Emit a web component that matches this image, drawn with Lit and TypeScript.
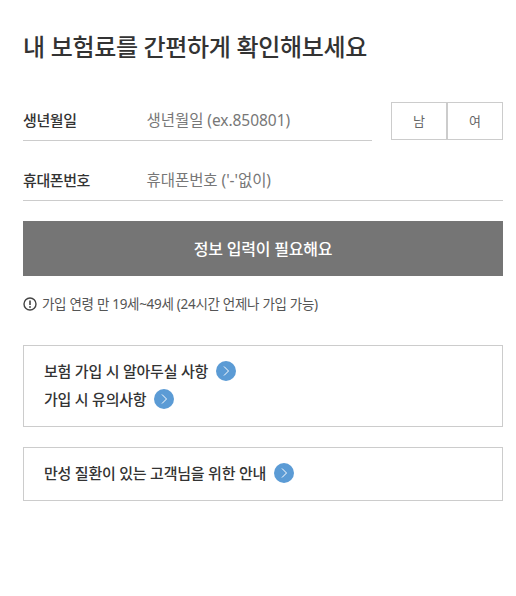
import { LitElement, html, css } from "lit";
import { customElement } from "lit/decorators.js";

const arrow = html`<svg class="arrow" viewBox="0 0 20 20" aria-hidden="true"><circle cx="10" cy="10" r="10" fill="#5b9bd5"/><path d="M8 5.5 L12.5 10 L8 14.5" fill="none" stroke="#fff" stroke-width="1"/></svg>`;

@customElement("app-root")
export class AppRoot extends LitElement {
  static styles = css`
    :host { display: block; background: #fff; height: 596px; font-family: "Noto Sans", "Noto Sans CJK KR", sans-serif; color: #333; }
    .page { padding: 29px 13px 0 23px; box-sizing: border-box; }
    h1 { margin: 0; font-size: 24px; line-height: 36px; font-weight: 500; letter-spacing: -0.33px; color: #333; }
    .row1 { display: flex; margin-top: 37px; gap: 19px; }
    .field { display: flex; align-items: center; flex: 1; border-bottom: 1px solid #ccc; box-sizing: border-box; }
    .f1 { height: 39px; padding-bottom: 3px; }
    .f2 { height: 40px; margin-top: 20px; padding-bottom: 3px; }
    .label { width: 124px; font-size: 15px; font-weight: 500; letter-spacing: -0.4px; color: #333; }
    .ph { font-size: 15.5px; color: #777; letter-spacing: -0.05px; margin-left: -0.5px; }
    .sex { display: flex; }
    .sex div { width: 56px; height: 38px; padding-bottom: 2px; border: 1px solid #ccc; display: flex; align-items: center; justify-content: center; font-size: 13px; color: #666; box-sizing: border-box; }
    .btn { margin-top: 20px; height: 55px; background: #757575; color: #fff; display: flex; align-items: center; justify-content: center; font-size: 16px; font-weight: 500; letter-spacing: -0.2px; padding-bottom: 2px; box-sizing: border-box; }
    .note { display: flex; align-items: center; gap: 5px; margin-top: 17px; height: 20px; font-size: 13.5px; color: #555; letter-spacing: -0.3px; }
    .note svg { width: 14px; height: 14px; flex: none; margin-top: 1px; }
    .box { border: 1px solid #ccc; padding: 15px 20px 17px; margin-top: 32px; display: flex; flex-direction: column; gap: 8px; }
    .box + .box { margin-top: 20px; }
    .link { display: flex; align-items: center; gap: 8px; height: 20px; font-size: 15px; font-weight: 500; letter-spacing: -0.22px; color: #333; }
    .link span { margin-bottom: 2px; }
    .arrow { width: 20px; height: 20px; flex: none; }
  `;
  render() {
    return html`<div class="page">
      <h1>내 보험료를 간편하게 확인해보세요</h1>
      <div class="row1">
        <div class="field f1"><span class="label">생년월일</span><span class="ph">생년월일 (ex.850801)</span></div>
        <div class="sex"><div>남</div><div>여</div></div>
      </div>
      <div class="field f2"><span class="label">휴대폰번호</span><span class="ph">휴대폰번호 ('-'없이)</span></div>
      <div class="btn">정보 입력이 필요해요</div>
      <div class="note">
        <svg viewBox="0 0 14 14"><circle cx="7" cy="7" r="6" fill="none" stroke="#444" stroke-width="1.4"/><path d="M7 3.5V8" stroke="#444" stroke-width="1.6"/><circle cx="7" cy="10" r="0.9" fill="#444"/></svg>
        <span>가입 연령 만 19세~49세 (24시간 언제나 가입 가능)</span>
      </div>
      <div class="box">
        <div class="link"><span>보험 가입 시 알아두실 사항</span>${arrow}</div>
        <div class="link"><span>가입 시 유의사항</span>${arrow}</div>
      </div>
      <div class="box">
        <div class="link"><span>만성 질환이 있는 고객님을 위한 안내</span>${arrow}</div>
      </div>
    </div>`;
  }
}
